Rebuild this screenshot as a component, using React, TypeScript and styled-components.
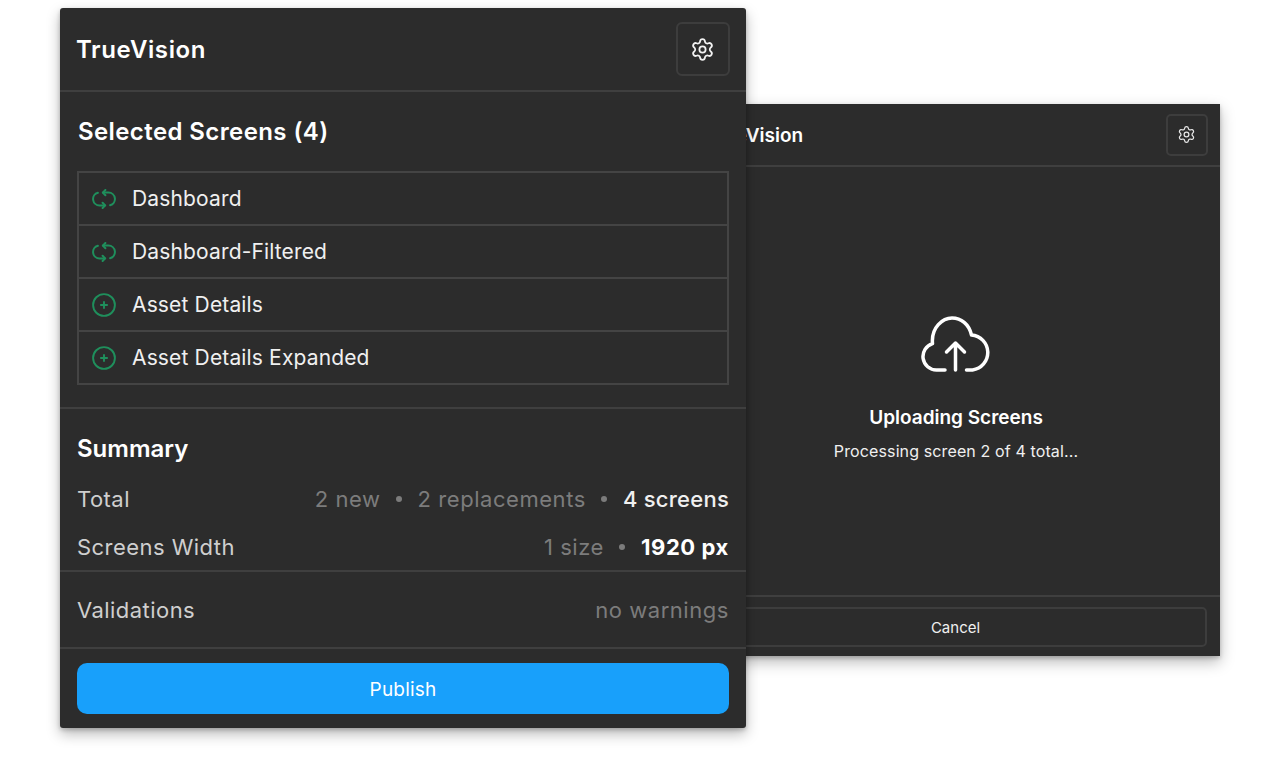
import React from "react";
import styled, { createGlobalStyle } from "styled-components";
import { Settings } from "lucide-react";

const GlobalStyle = createGlobalStyle`
    html, body {
        margin: 0;
        background: #fff;
        font-family: Inter, "Noto Sans", sans-serif;
        -webkit-font-smoothing: antialiased;
    }
    * { box-sizing: border-box; }
`;

const SyncIcon = () => (
    <svg width="24" height="20" viewBox="0 0 24 20" fill="none" stroke="#1f8f5c" strokeWidth="2" strokeLinecap="round" strokeLinejoin="round">
        <path d="M11 3.600H16.500a6.400 6.400 0 0 1 1.600 12.600" />
        <path d="M13 16.400H7.500a6.400 6.400 0 0 1-1.600-12.600" />
        <path d="M13.400 1 10.800 3.600l2.600 2.600" />
        <path d="M10.600 13.800l2.600 2.600-2.600 2.600" />
    </svg>
);

const AddIcon = () => (
    <svg width="24" height="24" viewBox="0 0 24 24" fill="none" stroke="#1f8f5c" strokeWidth="1.9" strokeLinecap="round">
        <circle cx="12" cy="12" r="10.900" />
        <path d="M12 8.900v6.200M8.900 12h6.200" />
    </svg>
);

const CloudIcon = () => (
    <svg width="70" height="56" viewBox="0 0 70 56" fill="none" stroke="#fff" strokeWidth="3.500" strokeLinecap="round" strokeLinejoin="round">
        <path d="M24 54H15.500A13.500 13.500 0 0 1 11.500 27.600C10 11 22 2 31 2c9 0 17 6 19.500 17A17.600 17.600 0 0 1 51.500 54H45.500" />
        <path d="M34.500 54V27M25.500 36l9-9 9 9" />
    </svg>
);

const screens = [
    { name: "Dashboard", kind: "sync" },
    { name: "Dashboard-Filtered", kind: "sync" },
    { name: "Asset Details", kind: "add" },
    { name: "Asset Details Expanded", kind: "add" },
];

export default function App() {
    return (
        <Stage>
            <GlobalStyle />
            <BackPanel>
                <BackHeader>
                    <BackTitle>TrueVision</BackTitle>
                    <BackGear>
                        <Settings size={19} strokeWidth={1.6} />
                    </BackGear>
                </BackHeader>
                <Progress>
                    <CloudIcon />
                    <ProgressTitle>Uploading Screens</ProgressTitle>
                    <ProgressText>Processing screen 2 of 4 total...</ProgressText>
                </Progress>
                <BackFooter>
                    <CancelButton>Cancel</CancelButton>
                </BackFooter>
            </BackPanel>

            <MainPanel>
                <Header>
                    <Title>TrueVision</Title>
                    <GearButton>
                        <Settings size={25} strokeWidth={1.7} />
                    </GearButton>
                </Header>

                <ScreensSection>
                    <ScreensTitle>Selected Screens (4)</ScreensTitle>
                    <ScreenList>
                        {screens.map((s) => (
                            <ScreenRow key={s.name}>
                                <IconSlot>{s.kind === "sync" ? <SyncIcon /> : <AddIcon />}</IconSlot>
                                {s.name}
                            </ScreenRow>
                        ))}
                    </ScreenList>
                </ScreensSection>

                <SummarySection>
                    <SummaryTitle>Summary</SummaryTitle>
                    <SummaryRow $top={21}>
                        <RowLabel>Total</RowLabel>
                        <RowValues>
                            <Muted>2 new</Muted>
                            <Dot />
                            <Muted>2 replacements</Muted>
                            <Dot />
                            <Strong>4 screens</Strong>
                        </RowValues>
                    </SummaryRow>
                    <SummaryRow $top={21}>
                        <RowLabel>Screens Width</RowLabel>
                        <RowValues>
                            <Muted>1 size</Muted>
                            <Dot />
                            <Bold>1920 px</Bold>
                        </RowValues>
                    </SummaryRow>
                </SummarySection>

                <ValidationRow>
                    <RowLabel>Validations</RowLabel>
                    <Muted>no warnings</Muted>
                </ValidationRow>

                <Footer>
                    <PublishButton>Publish</PublishButton>
                </Footer>
            </MainPanel>
        </Stage>
    );
}

const Stage = styled.div`
    position: relative;
    width: 1280px;
    height: 760px;
    overflow: hidden;
    padding: 8px 0 0 60px;
`;

const MainPanel = styled.div`
    position: relative;
    width: 686px;
    height: 720px;
    display: flex;
    flex-direction: column;
    background: #2c2c2c;
    border-radius: 3px;
    color: #fff;
    box-shadow: 0 6px 14px rgba(0, 0, 0, 0.28), 0 2px 4px rgba(0, 0, 0, 0.2);
`;

const Header = styled.div`
    height: 84px;
    flex: none;
    display: flex;
    align-items: center;
    justify-content: space-between;
    padding: 0 16px 0 16px;
    border-bottom: 2px solid #3f3f3f;
`;

const Title = styled.div`
    font-size: 24px;
    font-weight: 600;
    line-height: 30px;
    letter-spacing: 0.6px;
    padding-top: 2px;
`;

const GearButton = styled.div`
    width: 54px;
    height: 54px;
    display: flex;
    align-items: center;
    justify-content: center;
    padding-right: 2px;
    border: 2px solid #3d3d3d;
    border-radius: 6px;
    color: #f2f2f2;
`;

const ScreensSection = styled.div`
    height: 317px;
    flex: none;
    padding: 25px 18px 0;
    border-bottom: 2px solid #3f3f3f;
`;

const ScreensTitle = styled.div`
    font-size: 24px;
    font-weight: 600;
    line-height: 30px;
    letter-spacing: 0.4px;
    margin-bottom: 24px;
`;

const ScreenList = styled.div`
    margin: 0 -1px 0 -1px;
    border: 2px solid #444;
`;

const ScreenRow = styled.div`
    height: 53px;
    display: flex;
    align-items: center;
    padding-left: 13px;
    font-size: 21px;
    letter-spacing: 0.15px;
    color: #f0f0f0;
    border-bottom: 2px solid #444;

    &:last-child {
        height: 51px;
        border-bottom: none;
    }
`;

const IconSlot = styled.span`
    width: 40px;
    display: flex;
    align-items: center;
`;

const SummarySection = styled.div`
    height: 163px;
    flex: none;
    padding: 25px 17px 0;
    border-bottom: 2px solid #3f3f3f;
`;

const SummaryTitle = styled.div`
    font-size: 24px;
    font-weight: 600;
    line-height: 30px;
`;

const SummaryRow = styled.div<{ $top: number }>`
    display: flex;
    align-items: center;
    justify-content: space-between;
    margin-top: ${(p) => p.$top}px;
    height: 27px;
    font-size: 22px;
`;

const RowLabel = styled.span`
    color: #cfcfcf;
    font-size: 22px;
    letter-spacing: 0.45px;
`;

const RowValues = styled.span`
    display: flex;
    align-items: center;
    gap: 15.5px;
`;

const Muted = styled.span`
    color: #7c7c7c;
    font-size: 22px;
    letter-spacing: 0.55px;
`;

const Strong = styled.span`
    color: #f0f0f0;
    font-weight: 500;
    letter-spacing: 0.25px;
`;

const Bold = styled.span`
    color: #fff;
    font-weight: 700;
    letter-spacing: 0.6px;
`;

const Dot = styled.i`
    width: 6px;
    height: 6px;
    border-radius: 50%;
    background: #7c7c7c;
`;

const ValidationRow = styled.div`
    height: 77px;
    flex: none;
    display: flex;
    align-items: center;
    justify-content: space-between;
    padding: 0 17px;
    border-bottom: 2px solid #3f3f3f;
`;

const Footer = styled.div`
    padding: 14px 17px;
`;

const PublishButton = styled.div`
    height: 51px;
    display: flex;
    align-items: center;
    justify-content: center;
    padding-top: 1px;
    border-radius: 10px;
    background: #18a0fb;
    font-size: 19px;
    letter-spacing: 0.2px;
    color: #fff;
`;

const BackPanel = styled.div`
    position: absolute;
    left: 692px;
    top: 104px;
    width: 528px;
    height: 552px;
    display: flex;
    flex-direction: column;
    background: #2c2c2c;
    color: #fff;
    box-shadow: 0 6px 14px rgba(0, 0, 0, 0.28), 0 2px 4px rgba(0, 0, 0, 0.2);
`;

const BackHeader = styled.div`
    height: 63px;
    flex: none;
    display: flex;
    align-items: center;
    justify-content: space-between;
    padding: 0 12px 0 13px;
    border-bottom: 2px solid #3f3f3f;
`;

const BackTitle = styled.div`
    font-size: 19px;
    font-weight: 600;
    padding-top: 1px;
`;

const BackGear = styled.div`
    width: 42px;
    height: 42px;
    display: flex;
    align-items: center;
    justify-content: center;
    padding-right: 2px;
    border: 2px solid #3d3d3d;
    border-radius: 5px;
    color: #e8e8e8;
`;

const Progress = styled.div`
    flex: 1;
    display: flex;
    flex-direction: column;
    align-items: center;
    padding-top: 149px;
`;

const ProgressTitle = styled.div`
    margin-top: 34px;
    font-size: 19px;
    font-weight: 600;
    line-height: 24px;
`;

const ProgressText = styled.div`
    margin-top: 10px;
    font-size: 16px;
    letter-spacing: 0.12px;
    line-height: 22px;
    color: #f0f0f0;
`;

const BackFooter = styled.div`
    height: 61px;
    flex: none;
    padding: 10px 13px 9px 12px;
    border-top: 2px solid #3f3f3f;
`;

const CancelButton = styled.div`
    height: 40px;
    display: flex;
    align-items: center;
    justify-content: center;
    border: 2px solid #3d3d3d;
    border-radius: 5px;
    font-size: 15px;
    color: #f0f0f0;
`;
